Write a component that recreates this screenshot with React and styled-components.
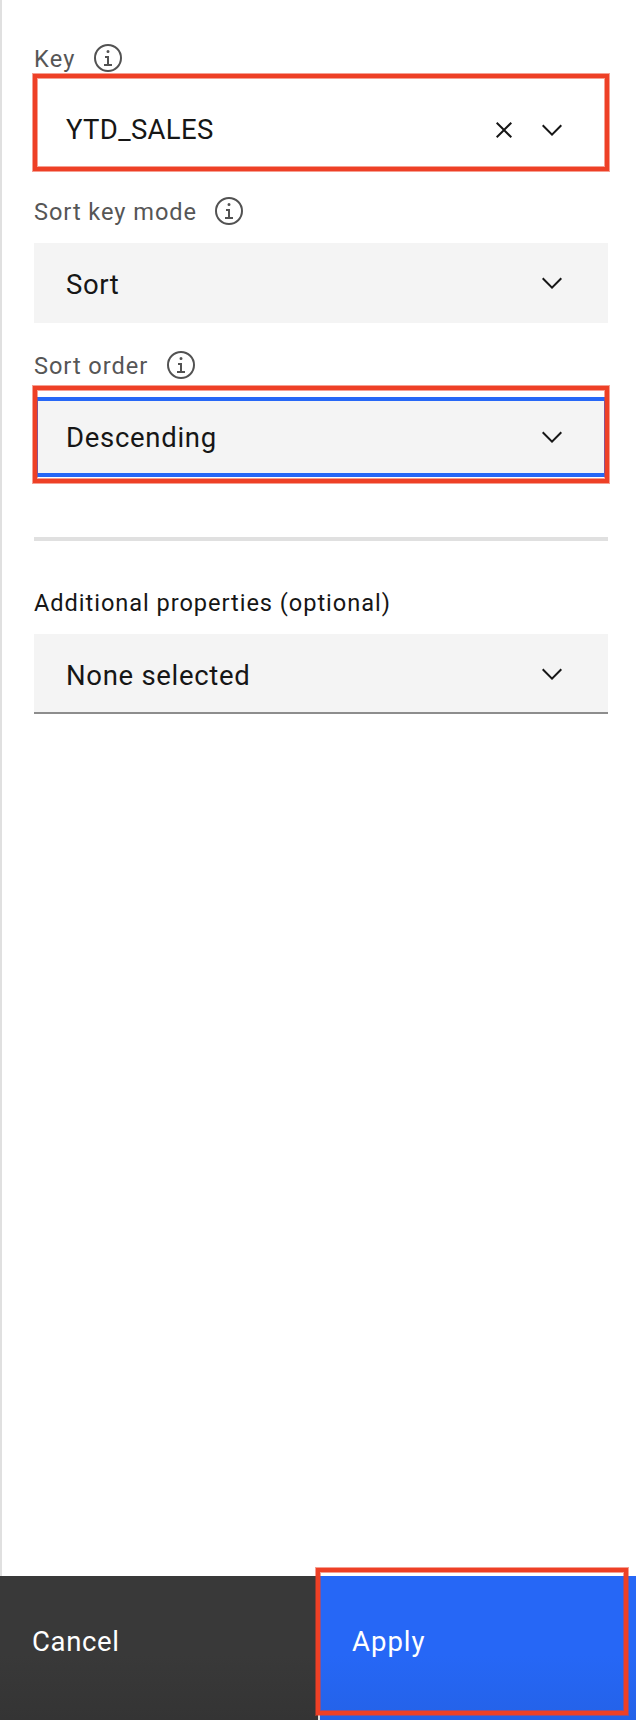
import React from "react";
import styled, { createGlobalStyle, css } from "styled-components";

const GlobalStyle = createGlobalStyle`
  * { box-sizing: border-box; }
  body {
    margin: 0;
    background: #fff;
    font-family: Roboto, "Liberation Sans", sans-serif;
    color: #161616;
  }
`;

const Panel = styled.div`
  display: flex;
  flex-direction: column;
  width: 636px;
  height: 1720px;
  background: #fff;
  overflow: hidden;
`;

const Form = styled.form`
  flex: 1;
  padding: 42px 28px 0 32px;
  border-left: 2px solid #e0e0e0;
`;

const Field = styled.div`
  position: relative;
  margin-bottom: 26px;
`;

const LabelRow = styled.div`
  display: flex;
  align-items: center;
  height: 32px;
  margin-bottom: ${(p) => (p.$tight ? 15 : 16)}px;
`;

const Label = styled.label`
  padding-top: 1px;
  margin-right: ${(p) => p.$gap ?? 16}px;
  font-size: 23.6px;
  line-height: 32px;
  letter-spacing: ${(p) => p.$track ?? 0.95}px;
  white-space: nowrap;
  color: ${(p) => (p.$strong ? "#161616" : "#565656")};
`;

const Select = styled.div`
  display: flex;
  align-items: center;
  height: 80px;
  padding: 0 40px 0 32px;
  background: ${(p) => (p.$plain ? "transparent" : "#f4f4f4")};
  ${(p) => p.$focused && css`
    padding: 0 36px 0 28px;
    border: 4px solid #2667f6;
  `}
  ${(p) => p.$underlined && css`
    box-shadow: inset 0 -2px #8d8d8d;
  `}
`;

const Value = styled.span`
  flex: 1;
  padding-top: ${(p) => p.$drop ?? 3}px;
  font-size: 27.5px;
  line-height: 36px;
  letter-spacing: ${(p) => p.$track ?? 0.7}px;
  white-space: nowrap;
`;

const Icons = styled.div`
  display: flex;
  gap: 16px;
  padding-top: ${(p) => p.$drop ?? 0}px;
`;

const Icon = styled.svg`
  display: block;
  flex: none;
  width: 32px;
  height: 32px;
  fill: ${(p) => p.$color ?? "#161616"};
`;

const Divider = styled.hr`
  height: 4px;
  margin: 60px 0 45px;
  border: 0;
  background: #e0e0e0;
`;

const Footer = styled.div`
  position: relative;
  display: flex;
  gap: 2px;
  height: 144px;
  background: #e0e0e0;
`;

const Action = styled.button`
  width: ${(p) => p.$width}px;
  padding: 3px 32px 15px;
  border: 0;
  background: ${(p) =>
    p.$primary
      ? "linear-gradient(#2667f6 55%, #2462e8)"
      : "linear-gradient(#393939 55%, #343434)"};
  color: #fff;
  font-family: inherit;
  font-size: 27.5px;
  line-height: 36px;
  letter-spacing: ${(p) => (p.$primary ? 1 : 0.65)}px;
  text-align: left;
`;

const Highlight = styled.div`
  position: absolute;
  top: ${(p) => p.$top}px;
  left: ${(p) => p.$left}px;
  width: ${(p) => p.$width}px;
  height: ${(p) => p.$height}px;
  border: 4px solid #ee4026;
  box-shadow: 0 0 0 1px rgba(238, 64, 38, 0.5), inset 0 0 0 1px rgba(238, 64, 38, 0.5);
  pointer-events: none;
`;

const InfoIcon = () => (
  <Icon viewBox="0 0 32 32" $color="#525252">
    <path d="M17 22V14H13v2h2v6H12v2h8V22zM16 8a1.5 1.5 0 1 0 1.5 1.5A1.5 1.5 0 0 0 16 8z" />
    <path d="M16 30A14 14 0 1 1 30 16 14 14 0 0 1 16 30zM16 4A12 12 0 1 0 28 16 12 12 0 0 0 16 4z" />
  </Icon>
);

const ChevronIcon = () => (
  <Icon viewBox="0 0 32 32">
    <path d="M16 22L6 12 7.4 10.6 16 19.2 24.6 10.6 26 12z" />
  </Icon>
);

const CloseIcon = () => (
  <Icon viewBox="0 0 32 32">
    <path d="M24 9.4L22.6 8 16 14.6 9.4 8 8 9.4 14.6 16 8 22.6 9.4 24 16 17.4 22.6 24 24 22.6 17.4 16z" />
  </Icon>
);

export default function App() {
  return (
    <>
      <GlobalStyle />
      <Panel>
        <Form>
          <Field>
            <LabelRow $tight>
              <Label $gap={17} $track={1.15}>Key</Label>
              <InfoIcon />
            </LabelRow>
            <Select $plain>
              <Value $drop={1} $track={0.33}>YTD_SALES</Value>
              <Icons $drop={2}>
                <CloseIcon />
                <ChevronIcon />
              </Icons>
            </Select>
            <Highlight $top={32} $left={-1} $width={576} $height={97} />
          </Field>
          <Field>
            <LabelRow>
              <Label $gap={16.4}>Sort key mode</Label>
              <InfoIcon />
            </LabelRow>
            <Select>
              <Value $track={0.6}>Sort</Value>
              <Icons>
                <ChevronIcon />
              </Icons>
            </Select>
          </Field>
          <Field>
            <LabelRow>
              <Label $gap={16.5}>Sort order</Label>
              <InfoIcon />
            </LabelRow>
            <Select $focused>
              <Value $drop={1}>Descending</Value>
              <Icons>
                <ChevronIcon />
              </Icons>
            </Select>
            <Highlight $top={37} $left={-1} $width={576} $height={97} />
          </Field>
          <Divider />
          <Field>
            <LabelRow>
              <Label $strong>Additional properties (optional)</Label>
            </LabelRow>
            <Select $underlined>
              <Value>None selected</Value>
              <Icons>
                <ChevronIcon />
              </Icons>
            </Select>
          </Field>
        </Form>
        <Footer>
          <Action type="button" $width={318}>Cancel</Action>
          <Action type="button" $width={316} $primary>Apply</Action>
          <Highlight $top={-8} $left={316} $width={312} $height={147} />
        </Footer>
      </Panel>
    </>
  );
}
